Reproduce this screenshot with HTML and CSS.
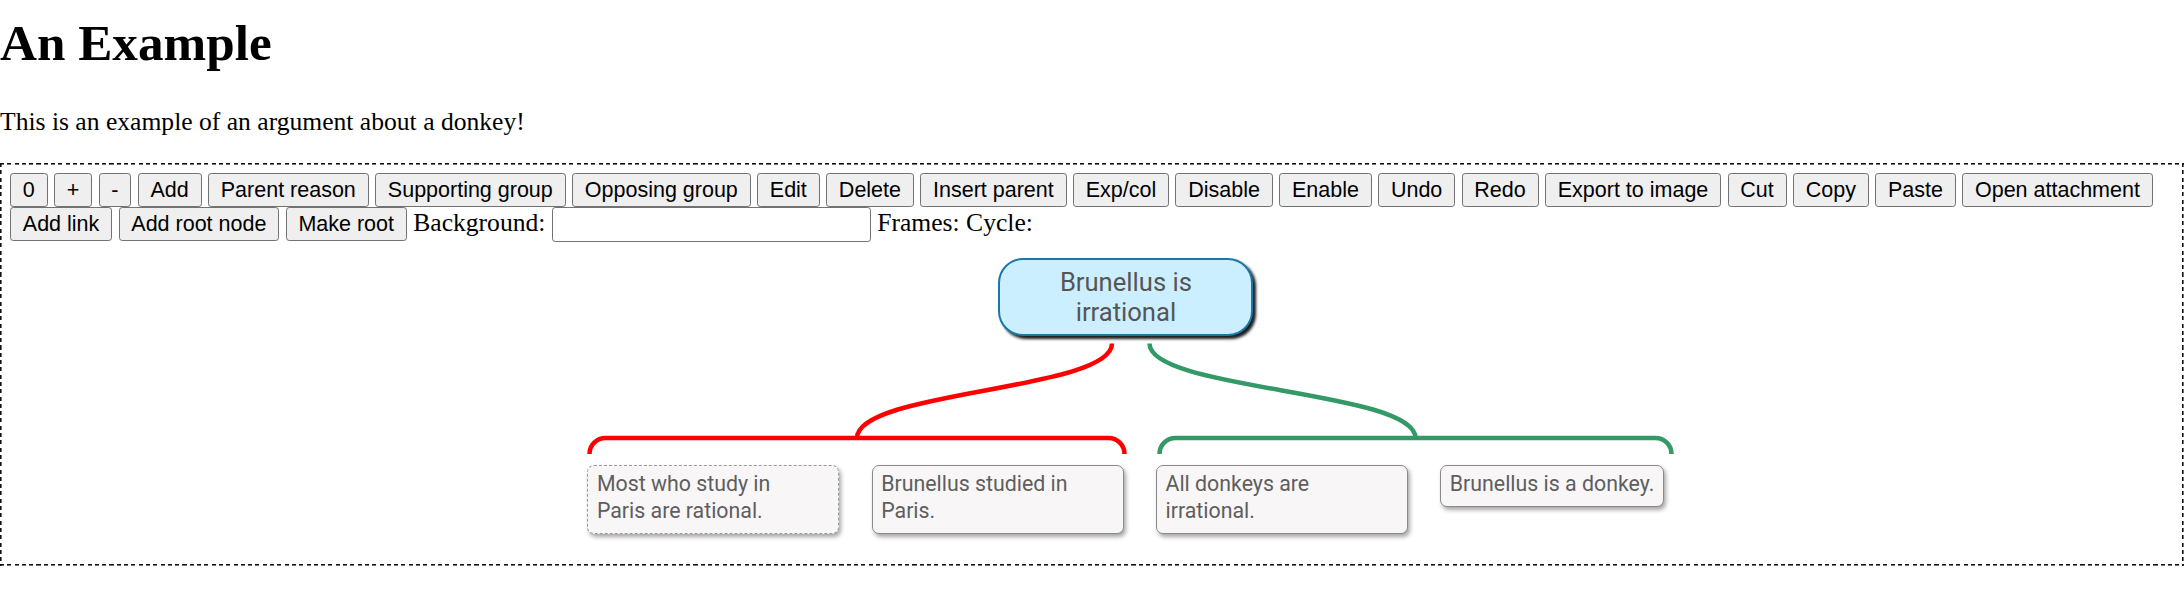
FILE: index.html
```html
<!DOCTYPE html>
<html lang="en">
<head>
<meta charset="utf-8">
<title>An Example</title>
<link rel="stylesheet" href="styles.css">
</head>
<body>
<h1 class="title">An Example</h1>
<p class="intro">This is an example of an argument about a donkey!</p>
<div class="mapper">
  <div class="toolbar">
    <button class="btn">0</button>
    <button class="btn">+</button>
    <button class="btn">-</button>
    <button class="btn">Add</button>
    <button class="btn">Parent reason</button>
    <button class="btn">Supporting group</button>
    <button class="btn">Opposing group</button>
    <button class="btn">Edit</button>
    <button class="btn">Delete</button>
    <button class="btn">Insert parent</button>
    <button class="btn">Exp/col</button>
    <button class="btn">Disable</button>
    <button class="btn">Enable</button>
    <button class="btn">Undo</button>
    <button class="btn">Redo</button>
    <button class="btn">Export to image</button>
    <button class="btn">Cut</button>
    <button class="btn">Copy</button>
    <button class="btn">Paste</button>
    <button class="btn">Open attachment</button>
    <button class="btn">Add link</button>
    <button class="btn">Add root node</button>
    <button class="btn">Make root</button>
    Background: <input class="bg-input" type="text"> Frames: Cycle:
  </div>
  <div class="map">
    <svg class="links" xmlns="http://www.w3.org/2000/svg">
      <path class="link link-red" d="M1102 101.5 C1102 148.5 847 148.5 847 196"/>
      <path class="link link-green" d="M1139.5 101.5 C1139.5 148.5 1405.5 148.5 1405.5 196"/>
      <path class="link link-red" d="M579.5 212 A16 16 0 0 1 595.5 196 H1098.5 A16 16 0 0 1 1114.5 212"/>
      <path class="link link-green" d="M1149.5 212 A16 16 0 0 1 1165.5 196 H1645.5 A16 16 0 0 1 1661.5 212"/>
    </svg>
    <div class="node root">Brunellus is irrational</div>
    <div class="children">
      <div class="node child child-dashed">Most who study in Paris are rational.</div>
      <div class="node child">Brunellus studied in Paris.</div>
      <div class="node child">All donkeys are irrational.</div>
      <div class="node child child-fit">Brunellus is a donkey.</div>
    </div>
  </div>
</div>
</body>
</html>
```

FILE: styles.css
```css
body {
  margin: 0;
  font-family: "Liberation Serif", "Times New Roman", serif;
  font-size: 25.6px;
  color: #000;
  background: #fff;
}

.title {
  font-size: 51.2px;
  line-height: 58.8px;
  font-weight: bold;
  margin: 14px 0 34.3px;
}

.intro {
  margin: 0 0 26.4px;
  line-height: 29.4px;
}

.mapper {
  padding: 10px;
  background-image:
    repeating-linear-gradient(90deg, #111 0 4px, transparent 4px 7.3px),
    repeating-linear-gradient(90deg, #111 0 4px, transparent 4px 7.3px),
    repeating-linear-gradient(180deg, #111 0 4px, transparent 4px 7.3px),
    repeating-linear-gradient(180deg, #111 0 4px, transparent 4px 7.3px);
  background-size: 100% 1.6px, 100% 1.6px, 1.6px 100%, 1.6px 100%;
  background-position: left top, left bottom, left top, right top;
  background-repeat: no-repeat;
}

.toolbar {
  line-height: 29.4px;
}

.btn {
  font-family: "Liberation Sans", Arial, sans-serif;
  font-size: 21.5px;
  line-height: 24.6px;
  margin: 0;
  padding: 3.7px 11.8px;
  border: 1px solid #727272;
  border-radius: 3.2px;
  background: #efefef;
  color: #000;
}

.bg-input {
  width: 319px;
  height: 35px;
  box-sizing: border-box;
  margin: 0;
  padding: 1.6px 3.2px;
  border: 1px solid #727272;
  border-radius: 3.2px;
  background: #fff;
  font-family: "Liberation Sans", Arial, sans-serif;
  font-size: 21.5px;
}

.map {
  position: relative;
  height: 314px;
}

.links {
  position: absolute;
  left: 0;
  top: 0;
  width: 100%;
  height: 100%;
  overflow: visible;
}

.link {
  fill: none;
  stroke-width: 4.5;
}

.link-red {
  stroke: #ff0000;
}

.link-green {
  stroke: #339966;
}

.node {
  box-sizing: border-box;
  font-family: Roboto, "Noto Sans", sans-serif;
}

.root {
  position: absolute;
  left: 988.4px;
  top: 16.6px;
  width: 255px;
  padding: 7px 20px;
  border: 2px solid #1a78a8;
  border-radius: 25px;
  background: #ccefff;
  box-shadow: 3px 3px 3px #1a1a1a;
  text-align: center;
  font-size: 25.6px;
  line-height: 30px;
  color: #555;
}

.children {
  position: absolute;
  left: 577.4px;
  top: 223.6px;
  display: flex;
  align-items: flex-start;
  gap: 32.3px;
}

.child {
  width: 252px;
  padding: 5px 30px 8px 8.5px;
  border: 1.5px solid #8a8a8a;
  border-radius: 7px;
  background: #f8f6f7;
  box-shadow: 2px 3px 4px rgba(0, 0, 0, 0.35);
  font-size: 21.33px;
  line-height: 26.6px;
  color: #5e5e5e;
}

.child-dashed {
  border-style: dashed;
  border-color: #9a9a9a;
}

.child-fit {
  width: auto;
  padding-right: 8.5px;
}
```
